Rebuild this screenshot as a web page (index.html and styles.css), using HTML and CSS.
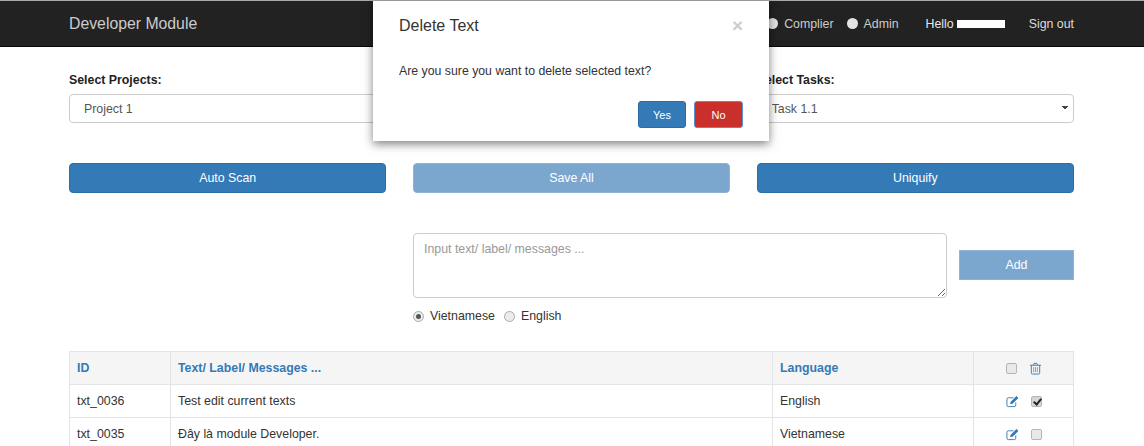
FILE: index.html
```html
<!DOCTYPE html>
<html lang="en">
<head>
  <meta charset="UTF-8">
  <meta name="viewport" content="width=device-width, initial-scale=1.0">
  <link rel="stylesheet" href="styles.css">
  <title>Developer Module</title>
</head>
<body>
  <nav class="navbar">
    <span class="brand">Developer Module</span>
    <div class="nav-right">
      <label class="nav-radio"><span class="dot"></span>Complier</label>
      <label class="nav-radio nav-admin"><span class="dot"></span>Admin</label>
      <span class="hello">Hello <span class="redact"></span></span>
      <a class="signout">Sign out</a>
    </div>
  </nav>

  <div class="content">
    <div class="three-cols selects">
      <div>
        <label class="field-label">Select Projects:</label>
        <select class="form-select"><option>Project 1</option></select>
      </div>
      <div>
        <select class="form-select form-select-mid"><option></option></select>
      </div>
      <div>
        <label class="field-label">Select Tasks:</label>
        <select class="form-select"><option>Task 1.1</option></select>
      </div>
    </div>

    <div class="three-cols actions">
      <button class="btn btn-primary">Auto Scan</button>
      <button class="btn btn-primary btn-faded">Save All</button>
      <button class="btn btn-primary">Uniquify</button>
    </div>

    <div class="input-row">
      <textarea class="text-input" placeholder="Input text/ label/ messages ..."></textarea>
      <button class="btn-add">Add</button>
    </div>

    <div class="lang-row">
      <label class="lang"><input class="radio" type="radio" name="lang" checked>Vietnamese</label>
      <label class="lang"><input class="radio" type="radio" name="lang">English</label>
    </div>

    <table class="text-table">
      <thead>
        <tr>
          <th class="col-id">ID</th>
          <th class="col-text">Text/ Label/ Messages ...</th>
          <th class="col-lang">Language</th>
          <th class="col-act">
            <div class="act-cell">
              <input class="check" type="checkbox">
              <svg class="icon" width="13" height="13" viewBox="0 0 14 14" fill="none" stroke="#337ab7" stroke-width="1">
                <path d="M2.500 3.500v8.200c0 .8.500 1.300 1.200 1.300h6.600c.7 0 1.200-.5 1.200-1.300V3.500"/>
                <path d="M1 3.500h12"/>
                <path d="M4.800 3.300l.7-1.800h3l.7 1.800"/>
                <path d="M5 5.500v5.500M7 5.500v5.500M9 5.500v5.500" stroke="#7a9cc0"/>
              </svg>
            </div>
          </th>
        </tr>
      </thead>
      <tbody>
        <tr>
          <td>txt_0036</td>
          <td>Test edit current texts</td>
          <td>English</td>
          <td>
            <div class="act-cell">
              <svg class="icon" width="13" height="13" viewBox="0 0 14 14" fill="none" stroke="#337ab7">
                <path d="M10.500 8v3c0 1-.6 1.500-1.500 1.500H2.500c-.9 0-1.500-.5-1.500-1.500V4.500C1 3.500 1.600 3 2.500 3H8"/>
                <path d="M5 9.300l.5-2L11.300 1.500l1.600 1.600-5.800 5.700z" fill="#337ab7"/>
              </svg>
              <input class="check" type="checkbox" checked>
            </div>
          </td>
        </tr>
        <tr>
          <td>txt_0035</td>
          <td>Đây là module Developer.</td>
          <td>Vietnamese</td>
          <td>
            <div class="act-cell">
              <svg class="icon" width="13" height="13" viewBox="0 0 14 14" fill="none" stroke="#337ab7">
                <path d="M10.500 8v3c0 1-.6 1.500-1.500 1.500H2.500c-.9 0-1.500-.5-1.500-1.500V4.500C1 3.500 1.600 3 2.500 3H8"/>
                <path d="M5 9.300l.5-2L11.300 1.500l1.600 1.600-5.800 5.700z" fill="#337ab7"/>
              </svg>
              <input class="check" type="checkbox">
            </div>
          </td>
        </tr>
      </tbody>
    </table>
  </div>

  <div class="modal">
    <div class="modal-header">
      <h4 class="modal-title">Delete Text</h4>
      <span class="modal-close">×</span>
    </div>
    <p class="modal-body">Are you sure you want to delete selected text?</p>
    <div class="modal-footer">
      <button class="btn-small btn-yes">Yes</button>
      <button class="btn-small btn-no">No</button>
    </div>
  </div>
</body>
</html>
```

FILE: styles.css
```css
html, body {
  height: 446px;
  overflow: hidden;
}
body {
  margin: 0;
  font-family: "Liberation Sans", Arial, sans-serif;
  font-size: 12.35px;
  line-height: 18px;
  color: #333;
  background: #fff;
}
.navbar {
  display: flex;
  align-items: center;
  justify-content: space-between;
  height: 45px;
  padding: 0 70px 0 69px;
  background: #222;
  border-top: 1px solid #aaa;
  border-bottom: 1px solid #080808;
  color: #ccc;
}
.brand {
  font-size: 15.8px;
}
.nav-right {
  display: flex;
  align-items: center;
}
.nav-radio {
  display: flex;
  align-items: center;
}
.nav-admin {
  margin-left: 13px;
}
.dot {
  width: 11px;
  height: 11px;
  margin-right: 6px;
  border-radius: 50%;
  background: #e4e4e4;
}
.hello {
  display: flex;
  align-items: center;
  margin-left: 27px;
  color: #e6e6e6;
}
.redact {
  display: inline-block;
  width: 48px;
  height: 8px;
  margin: 1px 0 0 3px;
  background: #fff;
}
.signout {
  margin-left: 24px;
  color: #ddd;
}
.content {
  padding: 24px 70px 0 69px;
}
.three-cols {
  display: grid;
  grid-template-columns: repeat(3, 1fr);
  column-gap: 26.5px;
}
.field-label {
  display: block;
  margin-bottom: 5px;
  font-weight: bold;
  color: #222;
}
.form-select {
  display: block;
  width: 100%;
  height: 29px;
  padding: 0 14px;
  border: 1px solid #ccc;
  border-radius: 4px;
  appearance: none;
  background-color: #fff;
  background-image: linear-gradient(45deg, transparent 50%, #444 50%), linear-gradient(-45deg, transparent 50%, #444 50%);
  background-repeat: no-repeat;
  background-size: 3px 5px;
  background-position: right 8px top 11px, right 5px top 11px;
  font-family: inherit;
  font-size: 12.35px;
  color: #555;
}
.form-select-mid {
  margin-top: 23px;
}
.actions {
  margin-top: 40px;
}
.btn {
  height: 30px;
  padding: 0;
  border: 1px solid #2e6da4;
  border-radius: 4px;
  font-family: inherit;
  font-size: 12.35px;
  color: #fff;
}
.btn-primary {
  background: #337ab7;
}
.btn-faded {
  background: #7ba7cf;
  border-color: #8fb3d4;
}
.input-row {
  display: flex;
  align-items: center;
  margin: 40px 0 0 344px;
}
.text-input {
  box-sizing: border-box;
  width: 534px;
  height: 65px;
  padding: 6px 10px;
  border: 1px solid #ccc;
  border-radius: 4px;
  font-family: inherit;
  font-size: 12.35px;
  line-height: 18px;
}
.text-input::placeholder {
  color: #999;
}
.btn-add {
  width: 115px;
  height: 30px;
  margin: 0 0 2px 12px;
  border: 1px solid #8fb3d4;
  background: #7ba7cf;
  font-family: inherit;
  font-size: 12.35px;
  color: #fff;
}
.lang-row {
  display: flex;
  margin: 9px 0 0 344px;
}
.lang {
  display: flex;
  align-items: center;
  margin-right: 9px;
}
.radio {
  position: relative;
  width: 11px;
  height: 11px;
  margin: 0 6px 0 0;
  border: 1px solid #aaa;
  border-radius: 50%;
  appearance: none;
  background: #ececec;
}
.radio:checked::after {
  content: "";
  position: absolute;
  top: 2px;
  left: 2px;
  width: 5px;
  height: 5px;
  border-radius: 50%;
  background: #555;
}
.check {
  position: relative;
  width: 11px;
  height: 11px;
  margin: 0;
  border: 1px solid #b5b5b5;
  border-radius: 2px;
  appearance: none;
  background: #e9e9e9;
}
.check:checked {
  background: #d6d6d6;
}
.check:checked::after {
  content: "";
  position: absolute;
  top: 0;
  left: 3px;
  width: 3px;
  height: 6px;
  border: solid #222;
  border-width: 0 2px 2px 0;
  transform: rotate(40deg);
}
.text-table {
  width: 1005px;
  margin-top: 26px;
  border-collapse: collapse;
  table-layout: fixed;
}
.text-table th,
.text-table td {
  height: 32px;
  padding: 0 7px;
  border: 1px solid #e4e4e4;
  text-align: left;
  font-size: 12.35px;
}
.text-table th {
  background: #f5f5f5;
  color: #337ab7;
}
.col-id {
  width: 86px;
}
.col-lang {
  width: 186px;
}
.col-act {
  width: 85px;
}
.act-cell {
  display: flex;
  align-items: center;
  justify-content: center;
  gap: 12px;
}
.icon {
  display: block;
}
.modal {
  position: absolute;
  top: 1px;
  left: 373px;
  box-sizing: border-box;
  width: 396px;
  height: 140px;
  padding: 0 26px;
  background: #fff;
  box-shadow: 0 3px 9px rgba(0, 0, 0, 0.5);
}
.modal-header {
  display: flex;
  align-items: center;
  justify-content: space-between;
  height: 50px;
}
.modal-title {
  margin: 0;
  font-size: 16px;
  font-weight: normal;
}
.modal-close {
  font-size: 19px;
  font-weight: bold;
  color: #ccc;
}
.modal-body {
  margin: 11px 0 0;
  font-size: 12.3px;
}
.modal-footer {
  display: flex;
  justify-content: flex-end;
  gap: 8px;
  margin-top: 21px;
}
.btn-small {
  height: 27px;
  padding: 0;
  border: 1px solid #2e6da4;
  border-radius: 3px;
  font-family: inherit;
  font-size: 11px;
  color: #fff;
}
.btn-yes {
  width: 48px;
  background: #337ab7;
}
.btn-no {
  width: 49px;
  background: #c9302c;
  border-color: #5a8fd0;
}
```
